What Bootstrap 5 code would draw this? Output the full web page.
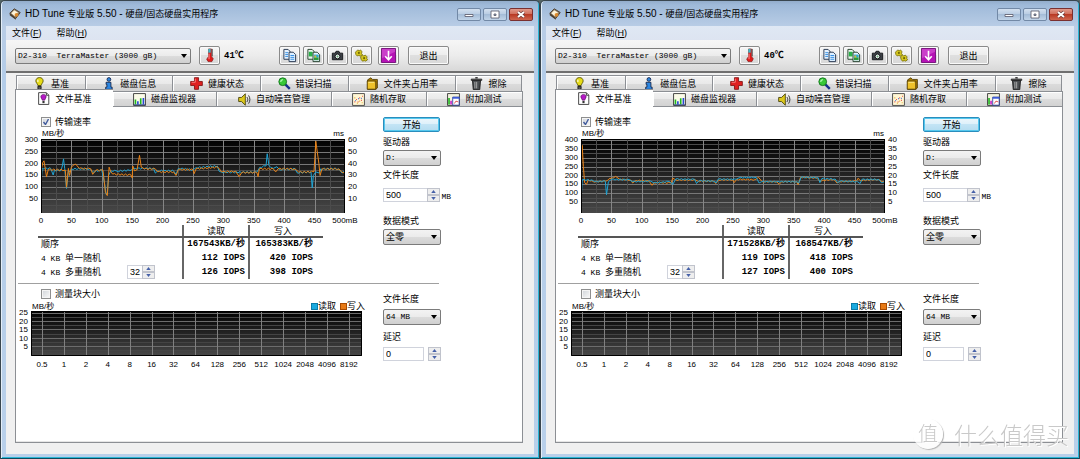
<!DOCTYPE html>
<html lang="zh-CN">
<head>
<meta charset="utf-8">
<meta name="viewport" content="width=device-width, initial-scale=1">
<title>HD Tune 专业版 5.50</title>
<link href="https://cdn.jsdelivr.net/npm/bootstrap@5.3.0/dist/css/bootstrap.min.css" rel="stylesheet">
<style>
  body { font-family: "Liberation Sans", "Noto Sans CJK SC", sans-serif; font-size: 9px; line-height: 12px; color: #000; background: #566; }
  button, input, select { font: inherit; color: inherit; }
  .mono { font-family: "Liberation Mono", "Noto Sans CJK SC", monospace; font-size: 8px; }
  .zh { font-size: 9px; }
  .ico { width: 13px; height: 13px; flex: none; }

  .win { min-height: 100vh; padding: 1px 5px 4px 5px; border: 1px solid #39464f; border-bottom-color: #0d4a5c; border-radius: 5px 5px 0 0;
    background: linear-gradient(#93adcb, #9fbad9 4px, #b9cde6 26px, #b3cce8 80px, #b9d0ea); box-shadow: inset 1px 0 #e4eef8, inset -1px -1px #2bb6d6; }
  .titlebar { height: 24px; font-size: 10px; padding-left: 3px; }
  .titlebar .ico { width: 12px; height: 12px; }
  .caps { gap: 2px; padding-right: 1px; }
  .cap-btn { width: 24px; height: 13px; border: 1px solid #7289a6; border-radius: 2px; padding: 0; background: linear-gradient(#d3e0ef, #b7cbe2 50%, #a5bdd8 50%, #c1d4e8); display: flex; align-items: center; justify-content: center; }
  .cap-btn.shut { border-color: #7a3030; background: linear-gradient(#e09a8c, #cf6a57 50%, #b93a25 50%, #cf6650); }
  .cap-btn svg { width: 12px; height: 9px; }
  .client { background: #f0f0f0; }
  .menubar { height: 14px; background: linear-gradient(#dfe8f4, #dde4f1); padding-left: 6px; gap: 15px; }
  .menubar a { color: #000; text-decoration: none; }

  .toolstrip { height: 31px; padding: 0 0 0 9px; background: linear-gradient(#f6f6f6, #ececec 50%, #d8d8d8); }
  .strip-line { height: 2px; background: #6f6f6f; }
  .drop { height: 16px; border: 1px solid #7b7b7b; border-radius: 2px; padding: 0 12px 0 2px; width: 100%; appearance: none; line-height: 12px;
    background: url("data:image/svg+xml,%3Csvg xmlns='http://www.w3.org/2000/svg' width='6' height='4'%3E%3Cpath d='M0 0h6L3 4z'/%3E%3C/svg%3E") no-repeat right 3px center, linear-gradient(#f3f3f3, #ebebeb 50%, #dcdcdc 50%, #d0d0d0); }
  .disk { width: 176px; height: 16px; }
  .tool { width: 21px; height: 19px; padding: 0; border: 1px solid #8a8a8a; border-radius: 2px; background: linear-gradient(#f6f6f6, #ededed 50%, #dfdfdf 50%, #d8d8d8); box-shadow: inset 0 0 0 1px #fafafa; display: flex; align-items: center; justify-content: center; }
  .tool .ico { width: 15px; height: 15px; }
  .tools { gap: 3px; }
  .tools .tool:last-child { margin-left: 3px; }
  .tool.wide { width: 41px; margin-left: 9px; }
  .temp { font-family: "Liberation Mono", "Noto Sans CJK SC", monospace; font-weight: 700; width: 35px; }

  .tabs { display: grid; }
  .tabs-back { grid-template-columns: 70fr 87fr 88fr 87fr 107fr 66fr; margin: 2px 12px 0 10px; }
  .tabs-front { grid-template-columns: 98fr 104fr 115fr 95fr 96fr; margin: 0 11px 0 9px; }
  .page-tab { height: 16px; border: 1px solid #8c8f94; border-left-width: 0; border-bottom: 0; padding: 0; background: linear-gradient(#f2f2f2, #e9e9e9 50%, #dcdcdc 50%, #d2d2d2); display: flex; align-items: center; justify-content: center; gap: 5px; white-space: nowrap; box-shadow: inset 1px 1px #fff; }
  .tabs-back .page-tab:first-child { border-left-width: 1px; }
  .tabs-front .page-tab { border-bottom: 1px solid #8c8f94; }
  .tabs-front .page-tab.active { height: 18px; margin-top: -2px; border-width: 1px 0 0 1px; background: #fff; }

  .sheet { margin: 0 11px 11px 9px; border: 1px solid #8c8f94; border-top: 0; background: #fff; box-shadow: inset 0 -1px #e6e6e6; }
  .block { display: grid; grid-template-columns: minmax(0, 1fr) 58px; column-gap: 18px; margin-right: 81px; }
  .rule { height: 1px; background: #a0a0a0; margin: 4px 83px 0 2px; }
  .left-a { padding-top: 9px; }
  .left-b { padding-top: 4px; }
  .check-row { padding-left: 25px; height: 12px; gap: 4px; }
  .tickbox { width: 10px; height: 10px; margin: 0; border: 1px solid #8e8f8f; appearance: none; background: linear-gradient(135deg, #cfd3d8, #fafafa); box-shadow: inset 0 0 0 1px #f4f4f4; }
  .tickbox:checked { background: url("data:image/svg+xml,%3Csvg xmlns='http://www.w3.org/2000/svg' viewBox='0 0 8 8'%3E%3Cpath d='M1.5 4l2 2.5 3-5.5' fill='none' stroke='%23405a9c' stroke-width='1.4'/%3E%3C/svg%3E"), linear-gradient(135deg, #cfd3d8, #fafafa); }

  .plot-grid { display: grid; font-size: 8px; }
  .plot-top { grid-template-columns: 25px minmax(0, 1fr) 20px; }
  .plot-low { grid-template-columns: 15px minmax(0, 1fr) 3px; }
  .plot-grid svg { width: 100%; display: block; }
  .plot-top svg { height: 74px; }
  .plot-low svg { height: 45px; }
  .axis-y { display: flex; flex-direction: column; justify-content: space-between; line-height: 8px; margin: -3px 3px -2px; text-align: right; }
  .axis-y span { height: 8px; }
  .axis-y.right { text-align: left; }
  .plot-low .axis-y { margin-bottom: 5px; margin-top: -2px; }
  .axis-x { display: flex; justify-content: space-between; height: 12px; padding-top: 2px; }
  .plot-low .axis-x { padding: 3px 13px 0 11px; height: 14px; }
  .axis-x span { width: 0; display: flex; justify-content: center; white-space: nowrap; }
  .unit-row { height: 11px; line-height: 11px; font-size: 8px; }
  .unit-a { padding: 0 21px 0 26px; }
  .unit-b { padding: 2px 0 0 16px; }
  .key { width: 7px; height: 7px; border: 1px solid #0c7aa8; background: #1aa9de; }
  .key.wr { border-color: #a84a00; background: #e87a14; }

  .results { width: calc(100% - 64px); margin-left: 22px; table-layout: fixed; border-collapse: collapse; }
  .results th, .results td { padding: 0 3px; height: 14px; line-height: 13px; white-space: nowrap; vertical-align: middle; }
  .results thead th { height: 12px; line-height: 10px; font-weight: 400; border-bottom: 2px solid #555; text-align: center; }
  .results tbody th { font-weight: 400; }
  .results td { font-family: "Liberation Mono", "Noto Sans CJK SC", monospace; font-weight: 700; text-align: right; font-size: 9px; }
  .results .bar { border-left: 2px solid #666; }
  .results td:last-child, .results th:last-child { padding-right: 10px; }
  .c-name { width: 51%; } .c-read { width: 23%; }

  .num { height: 14px; border: 1px solid #d0d3dc; border-right: 0; padding: 0 0 0 2px; min-width: 0; background: #fff; line-height: 12px; }
  .num.closed { border-right: 1px solid #d0d3dc; }
  .queue { width: 15px; margin-left: 26px; }
  .spin { display: flex; flex-direction: column; width: 13px; flex: none; }
  .spin button { height: 7px; padding: 0; border: 1px solid #c0c3cc; background: #eee; display: flex; align-items: center; justify-content: center; }
  .spin svg { width: 5px; height: 3px; }
  .go { width: 57px; height: 15px; padding: 0; border: 1px solid #2a8dbd; border-radius: 2px; background: linear-gradient(#eef6fb, #dcf0fa 50%, #c3e4f5 50%, #b4dcf0); box-shadow: inset 0 0 0 1px #55c8ee; line-height: 12px; }
  .side-a { padding-top: 10px; }
  .side-b { padding-top: 9px; }
  .gap-go, .gap-b { margin-top: 4px; }
  .gap-s { margin-top: 2px; }
  .gap-m { margin-top: 3px; }
  .gap-c { margin-top: 6px; }
  .gap-l { margin-top: 12px; }
  .size-row { margin: 7px -10px 0 0; }
  .mb-unit { padding: 3px 0 0 1px; }

  .brand-mark { position: fixed; right: 11px; bottom: 9px; font-family: "Noto Sans CJK SC", sans-serif; font-size: 23px; font-weight: 300; line-height: 32px; color: #c9c9c9; text-shadow: 1px 1px #fff; gap: 11px; pointer-events: none; }
  .brand-disc { width: 30px; height: 30px; border-radius: 50%; box-shadow: 1px 1px 1px #b4b4b4; line-height: 28px; font-size: 20px; text-align: center; background: #fffc; }
</style>
</head>
<body>
<svg class="d-none" xmlns="http://www.w3.org/2000/svg">
  <symbol id="i-app" viewBox="0 0 16 16"><path d="M1 7l6-6 8 5-6 8z" fill="#8d7a62" stroke="#3c2e1c"/><path d="M3 7l4-4 5 3-4 5z" fill="#fff4d8"/><path d="M1 7l8 7v1.500l-8-6z" fill="#4d3b25"/><circle cx="10" cy="9" r="2.500" fill="#dc8a2c"/></symbol>
  <symbol id="i-thermo" viewBox="0 0 16 16"><path d="M7 1h3v8l2 2.500-1.500 3h-4L5 12l2-3z" fill="#e11b1b" stroke="#7d1010" stroke-width=".7"/><path d="M6.700 1h2.600v4H6.700z" fill="#3fb8c8"/><path d="M7.500 6v6" stroke="#ff9b9b"/><path d="M11 1v8" stroke="#333" stroke-width=".8"/></symbol>
  <symbol id="i-copy" viewBox="0 0 16 16"><path d="M2 1.500h4.500l2 2V12H2z" fill="#e7f3ff" stroke="#26364f"/><path d="M3.500 5h3M3.500 7h3M3.500 9h3" stroke="#2f8be0"/><path d="M7.500 4.500H12l2.500 2.500v7.500h-7z" fill="#dceeff" stroke="#26364f"/><path d="M9 8h4M9 10h4M9 12h4" stroke="#2f8be0"/></symbol>
  <symbol id="i-copyimg" viewBox="0 0 16 16"><path d="M2 1.500h4.500l2 2V12H2z" fill="#eaf6ee" stroke="#24402c"/><path d="M3 4h4v5H3z" fill="#2bb34a"/><path d="M7.500 4.500H12l2.500 2.500v7.500h-7z" fill="#e8f3ff" stroke="#24402c"/><path d="M8.500 7h5v3h-5z" fill="#2aa9d0"/><path d="M8.500 10h5v3h-5z" fill="#2a9a3a"/><path d="M9 8h2v2H9z" fill="#e2bd20"/></symbol>
  <symbol id="i-cam" viewBox="0 0 16 16"><path d="M2.500 5.500h3l1-2h3l1 2h3v7h-11z" fill="#3c4046" stroke="#16181b"/><circle cx="8" cy="9" r="2.600" fill="#e5ecef" stroke="#111"/><circle cx="8" cy="9" r="1" fill="#69a76d"/></symbol>
  <symbol id="i-link" viewBox="0 0 16 16"><g fill="#d3c51f" stroke="#6f6600" stroke-width=".8"><path d="M1.500 4.500l2.500-2.500 1.500 1L7 2l1.500 2-.5 2 1 1-2 1.500-2-.5-1.500.5L2 7z"/><path d="M7 9.500l2-2 1.500 1 1.500-1L14 9.500l-.5 1.500 1 1.500L12.500 14l-1.500-.5-2 .5-1.500-2z"/></g><circle cx="5.200" cy="5.200" r="1.100" fill="#6f6600"/><circle cx="10.800" cy="10.800" r="1.100" fill="#6f6600"/></symbol>
  <symbol id="i-down" viewBox="0 0 16 16"><path d="M.5.5h15v15H.5z" fill="#b513b5" stroke="#73107a"/><path d="M1 1h14v3L1 11z" fill="#d95bd9" opacity=".6"/><path d="M8 3v9M4.500 8.800L8 12.500l3.500-3.700" fill="none" stroke="#fff" stroke-width="1.700"/></symbol>
  <symbol id="i-bulb" viewBox="0 0 16 16"><path d="M8 .7c3 0 4.500 2 4.500 4.200 0 2.300-2.200 3.200-2.500 5.600H6C5.700 8.100 3.500 7.200 3.500 4.900 3.500 2.700 5 .7 8 .7z" fill="#e6dc1a" stroke="#4d4800"/><path d="M6 3.500v2.500" stroke="#fff" stroke-width="1.300"/><path d="M6 11.500h4v3L8 15.500 6 14.500z" fill="#555" stroke="#111"/></symbol>
  <symbol id="i-info" viewBox="0 0 16 16"><circle cx="8.500" cy="3" r="2.300" fill="#2c86e0" stroke="#101c40"/><path d="M5 6.500h6v6h1.500v2.700h-8v-2.700H6V9H5z" fill="#2c86e0" stroke="#101c40"/></symbol>
  <symbol id="i-plus" viewBox="0 0 16 16"><path d="M5.500.8h5v4.700h4.700v5h-4.700v4.700h-5v-4.700H.8v-5h4.700z" fill="#df2020" stroke="#7c0c0c"/><path d="M6.500 2v4.500H2" fill="none" stroke="#ff8c8c"/></symbol>
  <symbol id="i-zoom" viewBox="0 0 16 16"><path d="M9 9l5.500 5.500" stroke="#18308c" stroke-width="3"/><circle cx="5.800" cy="5.800" r="4.800" fill="#38c838" stroke="#0c6a18"/><path d="M3.500 6c0-2 1-2.700 2.700-2.700" fill="none" stroke="#c8ffc8" stroke-width="1.300"/></symbol>
  <symbol id="i-folder" viewBox="0 0 16 16"><path d="M2 3.500l4-2.500 2 2h6v10.500l-2 1.700H2z" fill="#a87b00" stroke="#4a3600"/><path d="M1.500 5H12v10H1.500z" fill="#efc22a" stroke="#4a3600"/><path d="M3 6.500h7" stroke="#fff0a0"/></symbol>
  <symbol id="i-bin" viewBox="0 0 16 16"><path d="M3 4h10l-1 11.500H4z" fill="#4a4d50" stroke="#111"/><path d="M1.500 2.500h13v1.700h-13z" fill="#666" stroke="#111" stroke-width=".8"/><path d="M6.500 1h3" stroke="#111" stroke-width="1.500"/><path d="M6 6v8M8.200 6v8" stroke="#bbb"/></symbol>
  <symbol id="i-docbulb" viewBox="0 0 16 16"><path d="M2 .8h9.500l3 3v11.500H2z" fill="#fff" stroke="#222"/><path d="M11.500 1v3h3" fill="#ddd" stroke="#222"/><path d="M8 3c2.200 0 3.300 1.300 3.300 3S9.500 8.500 9.500 10h-3c0-1.500-1.800-2.300-1.800-4S5.800 3 8 3z" fill="#b41cc4" stroke="#4a0a55" stroke-width=".7"/><path d="M6.700 11h2.600v2.700H6.700z" fill="#333"/></symbol>
  <symbol id="i-bars" viewBox="0 0 16 16"><path d="M.7.7h14.600v14.600H.7z" fill="#fbfbe8" stroke="#222"/><path d="M3 14V8" stroke="#1fb61f" stroke-width="2"/><path d="M6 14v-4M12.800 14V6" stroke="#2848d8" stroke-width="2"/><path d="M9.500 14V6.500" stroke="#1fb61f" stroke-width="2"/><path d="M1 14.500h14" stroke="#1a3a8a"/></symbol>
  <symbol id="i-sound" viewBox="0 0 16 16"><path d="M.8 5.500h3.500L9 1v14l-4.700-4.500H.8z" fill="#dcc81c" stroke="#3e3800"/><path d="M11 5c1.300 2 1.300 4 0 6M13 3c2.200 3 2.200 7 0 10" fill="none" stroke="#333" stroke-width="1.200"/></symbol>
  <symbol id="i-rand" viewBox="0 0 16 16"><path d="M.7.7h14.600v14.600H.7z" fill="#fff6d4" stroke="#333"/><path d="M3 11h1M5 8h1M7 11h1M9 6h1M11 9h1M12.500 4h1" stroke="#e03838" stroke-width="1.500"/><path d="M3 6h1M6 12.500h1M9 10h1M12 12h1" stroke="#e0a018" stroke-width="1.500"/><path d="M4 9.500h1M7.500 7h1M11 6.500h1" stroke="#3868d8" stroke-width="1.500"/></symbol>
  <symbol id="i-extra" viewBox="0 0 16 16"><path d="M.7.7h14.600v14.600H.7z" fill="#f4f4e0" stroke="#222"/><path d="M2.500 14V6" stroke="#1fb61f" stroke-width="2"/><path d="M5 14V9.500" stroke="#c820c8" stroke-width="2"/><path d="M7 5h8v10H7z" fill="#fff" stroke="#2238a0"/><path d="M7 5h8v2H7z" fill="#3858d8"/><path d="M9 13l2-3 3 1" fill="none" stroke="#d83030"/></symbol>
</svg>

<main class="container-fluid p-0">
  <div class="row g-0" id="desk"></div>
</main>
<div class="brand-mark d-flex align-items-center"><span class="brand-disc">值</span><span>什么值得买</span></div>

<script src="https://cdn.jsdelivr.net/npm/bootstrap@5.3.0/dist/js/bootstrap.bundle.min.js"></script>
<script>
  const runs = [
    { id: 'a', temp: '41', max: 300, msStep: 10, front: 'write',
      seq: ['167543', '165383'], one: ['112', '420'], many: ['126', '398'],
      write: [0,35,1,180,3,205,5,212,9,145,12,175,40,173,42,100,45,180,47,150,50,185,57,198,63,180,82,178,85,155,90,172,102,172,106,80,109,65,112,185,115,165,118,156,148,152,150,140,151,190,154,170,158,175,162,235,165,185,170,178,188,178,192,165,218,165,222,150,226,175,250,175,252,158,255,178,290,185,298,165,320,168,326,145,330,162,355,163,357,145,359,178,382,178,386,165,390,178,418,178,424,164,449,166,452,295,457,200,459,150,462,177,490,178,494,165,500,160],
      read: [0,115,2,180,16,180,20,152,22,172,33,172,35,190,37,220,39,180,42,95,45,170,48,165,50,178,80,178,85,165,100,173,105,110,107,70,109,72,111,150,115,170,125,168,145,172,155,180,185,180,188,160,192,170,218,170,222,155,226,180,250,174,255,183,290,190,293,168,297,164,355,164,360,185,370,190,372,242,375,192,382,180,388,187,392,175,418,178,421,162,444,165,446,98,448,150,452,165,458,160,460,178,490,178,495,160,500,172] },
    { id: 'b', temp: '40', max: 400, msStep: 5, front: 'read',
      seq: ['171528', '168547'], one: ['119', '418'], many: ['127', '400'],
      write: [0,45,1,250,2,370,4,250,6,160,9,150,12,175,20,165,40,168,50,185,57,195,63,180,82,174,85,158,90,172,112,168,117,145,120,160,148,158,151,185,156,175,188,175,192,168,218,168,222,155,226,175,250,176,252,160,256,178,285,176,292,190,298,165,322,165,326,150,330,165,355,165,357,148,361,190,388,185,392,170,416,178,421,158,425,166,453,168,456,185,459,172,490,178,495,165,500,168],
      read: [0,50,2,175,18,175,22,165,40,168,42,92,45,165,50,178,80,176,85,165,115,168,120,158,145,166,151,150,156,180,187,178,190,155,194,170,220,168,222,158,226,180,255,178,260,187,288,190,293,158,297,165,355,165,358,158,362,190,390,188,393,160,396,182,418,180,422,160,426,168,455,165,459,155,462,178,490,178,494,160,500,165] }
  ];

  const W = 304, BASE = 72, TOP = 1;
  const inks = { write: '#ea8317', read: '#1fa4d4' };
  const icon = n => `<svg class="ico" aria-hidden="true"><use href="#i-${n}"/></svg>`;
  const line = (x1, y1, x2, y2, c) => `<path d="M${x1} ${y1}L${x2} ${y2}" stroke="${c}" vector-effect="non-scaling-stroke"/>`;
  const labels = a => a.map(v => `<span>${v}</span>`).join('');

  /* Measured points joined by a fine ripple, so long flat stretches look sampled */
  function trace(points, max, phase) {
    const out = [], y = v => (BASE - v / max * (BASE - TOP)).toFixed(1), x = v => (v / 500 * W).toFixed(1);
    for (let i = 0; i < points.length; i += 2) {
      const [x0, y0, x1, y1] = points.slice(i, i + 4);
      out.push(x(x0) + ',' + y(y0));
      if (x1 - x0 > 6) for (let s = x0 + 3, k = phase; s < x1 - 1; s += 3, k++)
        out.push(x(s) + ',' + y(y0 + (y1 - y0) * (s - x0) / (x1 - x0) + (k % 2 ? 3 : -3)));
    }
    return out.join(' ');
  }

  function speedPlot(r) {
    let g = '';
    for (let v = 25; v <= r.max; v += 25) { const y = Math.round(BASE - v / r.max * (BASE - TOP)) + .5; g += line(0, y, W, y, v % 50 ? '#4c4c4c' : '#787878'); }
    for (let v = 25; v < 500; v += 25) { const x = Math.round(v / 500 * W) + .5; g += line(x, 0, x, 74, v % 50 ? '#4c4c4c' : '#868686'); }
    const order = r.front === 'write' ? ['read', 'write'] : ['write', 'read'];
    const curves = order.map((k, i) => `<polyline points="${trace(r[k], r.max, i)}" fill="none" stroke="${inks[k]}" vector-effect="non-scaling-stroke"/>`).join('');
    return `<svg viewBox="0 0 ${W} 74" preserveAspectRatio="none" role="img" aria-label="传输速率">
      <rect width="${W}" height="74" fill="url(#fade-${r.id})"/>${g}${curves}
      <path d="M.5 74V.5H${W - .5}V74" fill="none" stroke="#000" vector-effect="non-scaling-stroke"/>
      <defs><linearGradient id="fade-${r.id}" x2="0" y2="1"><stop stop-color="#000"/><stop offset="1" stop-color="#484848"/></linearGradient></defs></svg>`;
  }

  function blockPlot(r) {
    let g = '';
    for (let i = 0; i < 10; i++) { const y = 2.5 + Math.round(i * 4.1); g += line(0, y, 331, y, i % 2 ? '#444' : '#6c6c6c'); }
    for (let i = 0; i < 15; i++) { const x = Math.round(11 + i * 21.9) + .5; g += line(x, 1, x, 45, '#808080'); }
    return `<svg viewBox="0 0 331 45" preserveAspectRatio="none" role="img" aria-label="测量块大小"><rect width="331" height="45" fill="url(#fade-${r.id})"/>${g}
      <path d="M.5 .5H330.500V44.500H.5z" fill="none" stroke="#000" vector-effect="non-scaling-stroke"/></svg>`;
  }

  const spin = () => `<span class="spin"><button type="button" aria-label="增加"><svg viewBox="0 0 6 4"><path d="M0 4l3-4 3 4z" fill="#4560a8"/></svg></button><button type="button" aria-label="减少"><svg viewBox="0 0 6 4"><path d="M0 0l3 4 3-4z" fill="#4560a8"/></svg></button></span>`;
  const tab = (n, t, on) => `<button type="button" role="tab" class="page-tab${on ? ' active' : ''}" aria-selected="${!!on}">${icon(n)}<span>${t}</span></button>`;
  const tool = (n, t) => `<button type="button" class="tool" aria-label="${t}">${icon(n)}</button>`;
  const row = (name, pair, unit, extra = '') => `<tr><th scope="row">${name}${extra}</th><td class="bar">${pair[0]}${unit}</td><td class="bar">${pair[1]}${unit}</td></tr>`;

  function windowHtml(r) {
    const steps = []; for (let v = r.max; v > 0; v -= 50) steps.push(v);
    const ms = steps.map(v => v / 50 * r.msStep);
    const xs = []; for (let v = 0; v < 500; v += 50) xs.push(v);
    return `<section class="col-6"><div class="win d-flex flex-column">
      <header class="titlebar d-flex align-items-center">${icon('app')}
        <span class="ms-1 flex-grow-1">HD Tune <span class="zh">专业版</span> 5.50 - <span class="zh">硬盘</span>/<span class="zh">固态硬盘实用程序</span></span>
        <div class="d-flex caps">
          <button type="button" class="cap-btn" aria-label="最小化"><svg viewBox="0 0 12 9"><path d="M2 4.500h8v2H2z" fill="#fff" stroke="#556" stroke-width=".8"/></svg></button>
          <button type="button" class="cap-btn" aria-label="最大化"><svg viewBox="0 0 12 9"><path d="M2 1h8v7H2zM5 4h2v1.500H5z" fill="#fff" fill-rule="evenodd" stroke="#556" stroke-width=".8"/></svg></button>
          <button type="button" class="cap-btn shut" aria-label="关闭"><svg viewBox="0 0 12 9"><path d="M3 2l6 5m0-5l-6 5" stroke="#633" stroke-width="3.200"/><path d="M3 2l6 5m0-5l-6 5" stroke="#fff" stroke-width="2"/></svg></button>
        </div></header>
      <div class="client flex-grow-1 d-flex flex-column">
        <nav class="menubar d-flex align-items-center"><a href="#">文件(<u>F</u>)</a><a href="#">帮助(<u>H</u>)</a></nav>
        <div class="toolstrip d-flex align-items-center">
          <div class="disk me-2"><select class="drop mono d-block" aria-label="磁盘"><option>D2-310&nbsp; TerraMaster (3000 gB)</option></select></div>
          ${tool('thermo', '温度')}<span class="temp ps-1 me-4">${r.temp}℃</span>
          <div class="d-flex flex-shrink-0 tools">${tool('copy', '复制信息')}${tool('copyimg', '复制图像')}${tool('cam', '截图')}${tool('link', '选项')}${tool('down', '保存')}</div>
          <button type="button" class="tool wide">退出</button>
        </div>
        <div class="strip-line"></div>
        <div class="tabs tabs-back" role="tablist">${tab('bulb', '基准')}${tab('info', '磁盘信息')}${tab('plus', '健康状态')}${tab('zoom', '错误扫描')}${tab('folder', '文件夹占用率')}${tab('bin', '擦除')}</div>
        <div class="tabs tabs-front" role="tablist">${tab('docbulb', '文件基准', true)}${tab('bars', '磁盘监视器')}${tab('sound', '自动噪音管理')}${tab('rand', '随机存取')}${tab('extra', '附加测试')}</div>
        <div class="sheet flex-grow-1">
          <div class="block">
            <div class="left-a">
              <div class="d-flex align-items-center check-row"><input type="checkbox" class="tickbox" id="rate-${r.id}" checked><label for="rate-${r.id}">传输速率</label></div>
              <div class="unit-row d-flex justify-content-between unit-a"><span>MB/秒</span><span>ms</span></div>
              <div class="plot-grid plot-top">
                <div class="axis-y">${labels(steps)}<span></span></div>${speedPlot(r)}<div class="axis-y right">${labels(ms)}<span></span></div>
                <span></span><div class="axis-x">${labels(xs)}<span>500mB</span></div><span></span>
              </div>
              <table class="results">
                <colgroup><col class="c-name"><col class="c-read"><col></colgroup>
                <thead><tr><th></th><th class="bar" scope="col">读取</th><th class="bar" scope="col">写入</th></tr></thead>
                <tbody>${row('顺序', r.seq, 'KB/秒')}
                ${row('<span class="mono">4 KB </span>单一随机', r.one, ' IOPS')}
                ${row('<span class="d-flex align-items-center"><label for="q-' + r.id + '"><span class="mono">4 KB </span>多重随机</label>', r.many, ' IOPS', '<input class="num queue" id="q-' + r.id + '" value="32">' + spin() + '</span>')}</tbody>
              </table>
            </div>
            <div class="side-a">
              <button type="button" class="go d-block">开始</button>
              <label class="d-block gap-go" for="drv-${r.id}">驱动器</label>
              <select class="drop mono d-block gap-s" id="drv-${r.id}"><option>D:</option></select>
              <label class="d-block gap-m" for="len-${r.id}">文件长度</label>
              <div class="d-flex size-row"><input class="num flex-grow-1" id="len-${r.id}" value="500">${spin()}<span class="mono mb-unit">MB</span></div>
              <label class="d-block gap-l" for="pat-${r.id}">数据模式</label>
              <select class="drop d-block gap-s" id="pat-${r.id}"><option>全零</option></select>
            </div>
          </div>
          <div class="rule"></div>
          <div class="block">
            <div class="left-b">
              <div class="d-flex align-items-center check-row"><input type="checkbox" class="tickbox" id="blk-${r.id}"><label for="blk-${r.id}">测量块大小</label></div>
              <div class="unit-row d-flex align-items-center unit-b"><span class="flex-grow-1">MB/秒</span><span class="key"></span><span class="zh">读取</span><span class="key wr ms-1"></span><span class="zh">写入</span></div>
              <div class="plot-grid plot-low">
                <div class="axis-y">${labels([25, 20, 15, 10, 5])}</div>${blockPlot(r)}<span></span>
                <span></span><div class="axis-x">${labels(['0.5', 1, 2, 4, 8, 16, 32, 64, 128, 256, 512, 1024, 2048, 4096, 8192])}</div><span></span>
              </div>
            </div>
            <div class="side-b">
              <label class="d-block" for="fl-${r.id}">文件长度</label>
              <select class="drop mono d-block gap-b" id="fl-${r.id}"><option>64 MB</option></select>
              <label class="d-block gap-c" for="dl-${r.id}">延迟</label>
              <div class="d-flex gap-1 gap-b"><input class="num closed flex-grow-1" id="dl-${r.id}" value="0">${spin()}</div>
            </div>
          </div>
        </div>
      </div></div></section>`;
  }
  document.getElementById('desk').innerHTML = runs.map(windowHtml).join('');
</script>
</body>
</html>
